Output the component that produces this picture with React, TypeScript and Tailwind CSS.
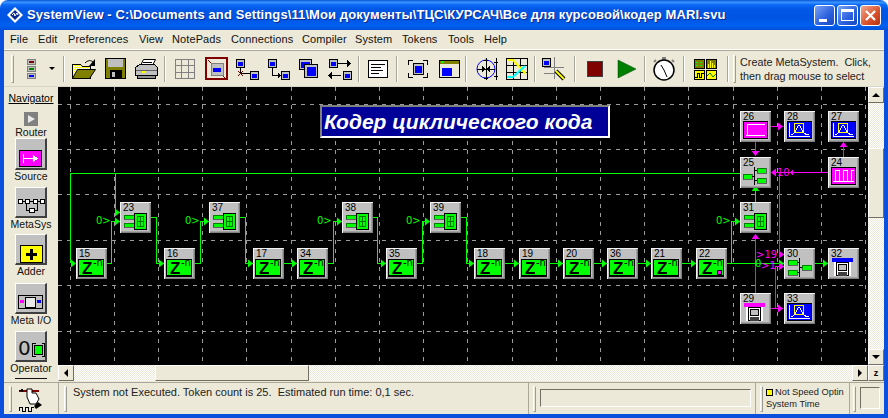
import React from "react";

const G = "#00ff00";
const M = "#ff00ff";
const sans = "font-['Liberation_Sans',Arial,sans-serif]";

type Kind = "z" | "zs" | "op" | "fan" | "fanr" | "src" | "pulse" | "sink" | "diskm" | "diskb";
const nodes: [string, number, number, Kind][] = [
  ["15", 76, 248, "z"], ["23", 120, 202, "op"], ["16", 164, 248, "z"], ["37", 209, 202, "op"],
  ["17", 253, 248, "z"], ["34", 297, 248, "z"], ["38", 342, 202, "op"], ["35", 386, 248, "z"],
  ["39", 430, 202, "op"], ["18", 474, 248, "z"], ["19", 519, 248, "z"], ["20", 563, 248, "z"],
  ["36", 607, 248, "z"], ["21", 651, 248, "z"], ["22", 696, 248, "zs"], ["30", 784, 248, "fanr"],
  ["32", 828, 248, "diskb"], ["29", 740, 293, "diskm"], ["33", 784, 293, "sink"], ["31", 740, 202, "op"],
  ["25", 740, 157, "fan"], ["26", 740, 111, "src"], ["28", 784, 111, "sink"], ["27", 828, 111, "sink"],
  ["24", 828, 157, "pulse"],
];

function NodeArt({ kind }: { kind: Kind }) {
  const disk = (c: string) => (
    <>
      <rect x="4" y="10" width="21" height="4" fill={c} />
      <rect x="6" y="14" width="17" height="14" fill="#fff" />
      <rect x="8.5" y="14.5" width="12" height="13" fill="#fff" stroke="#000" />
      <rect x="10.5" y="16.5" width="8" height="6" fill="#c0c0c0" stroke="#000" />
      <rect x="10" y="24" width="9" height="4" fill="#404040" />
    </>
  );
  if (kind === "op")
    return (
      <>
        <rect x="4" y="13" width="10" height="4" fill={G} stroke="#000" strokeWidth=".5" />
        <rect x="4" y="21" width="10" height="4" fill={G} stroke="#000" strokeWidth=".5" />
        <rect x="14.5" y="11.5" width="12" height="16" fill={G} stroke="#000" />
        <rect x="17.5" y="14.5" width="6" height="10" fill="none" stroke="#007700" />
        <path d="M18 19.5h5M20.5 15v9" stroke="#007700" />
      </>
    );
  if (kind === "fan")
    return (
      <>
        <rect x="3" y="17" width="9" height="5" fill={G} stroke="#000" strokeWidth=".5" />
        <rect x="17" y="11" width="9" height="5" fill={G} stroke="#000" strokeWidth=".5" />
        <rect x="17" y="21" width="9" height="5" fill={G} stroke="#000" strokeWidth=".5" />
        <path d="M14.5 10v18M12 19.5h3M14 13.5h3M14 23.5h3" stroke="#000" fill="none" />
      </>
    );
  if (kind === "fanr")
    return (
      <>
        <rect x="4" y="12" width="9" height="5" fill={G} stroke="#000" strokeWidth=".5" />
        <rect x="4" y="22" width="9" height="5" fill={G} stroke="#000" strokeWidth=".5" />
        <rect x="18" y="17" width="9" height="5" fill={G} stroke="#000" strokeWidth=".5" />
        <path d="M15.5 10v19M13 14.5h3M13 24.5h3M15 19.5h3" stroke="#000" fill="none" />
      </>
    );
  if (kind === "src")
    return (
      <>
        <rect x="3.5" y="10.5" width="24" height="17" fill={M} stroke="#000" />
        <path d="M6 24.5h19M7.5 24.5v-11h17" stroke="#fff" fill="none" />
      </>
    );
  if (kind === "pulse")
    return (
      <>
        <rect x="3.5" y="10.5" width="24" height="17" fill={M} stroke="#000" />
        <path d="M5 24.5h21M7.5 24.5v-11h4v11M15.500 24.5v-11h4v11h4v-11h2" stroke="#fff" fill="none" />
      </>
    );
  if (kind === "sink")
    return (
      <>
        <rect x="3.5" y="10.5" width="24" height="17" fill="#0000ff" stroke="#000" />
        <rect x="10.5" y="12.5" width="9" height="9" fill="none" stroke="#ffff00" />
        <path d="M5.500 12v13.5h20M7 24c3 0 3-2 5-5s2-5 3-5 2 3 3 5 3 5 7 5" stroke="#fff" fill="none" />
      </>
    );
  if (kind === "diskm") return disk(M);
  if (kind === "diskb") return disk("#0000ff");
  return null;
}

function BlockNode({ n, x, y, kind }: { n: string; x: number; y: number; kind: Kind }) {
  const isZ = kind === "z" || kind === "zs";
  return (
    <div
      className="absolute w-[31px] h-[31px] bg-[#c0c0c0] shadow-[inset_1px_1px_0_#f4f4f4,inset_-1px_-1px_0_#808080,inset_-2px_-2px_0_#a0a0a0]"
      style={{ left: x - 58, top: y - 87 }}
    >
      <span className={`absolute left-[3px] top-0 text-[10px] leading-[11px] text-black ${sans}`}>{n}</span>
      {isZ ? (
        <div className="absolute left-[2px] top-[11px] w-[26px] h-[18px] bg-[#00ff00] border border-black border-b-2">
          <span className={`absolute left-[3px] top-[1px] text-[17px] leading-[15px] font-bold text-black ${sans}`}>Z</span>
          <span className="absolute left-[14px] top-[-2px] text-[10px] leading-[10px] text-black font-['DejaVu_Sans',sans-serif]">-n</span>
          {kind === "zs" && <span className="absolute right-[2px] bottom-[1px] w-[3px] h-[3px] bg-[#ff00ff] outline outline-black" />}
        </div>
      ) : (
        <svg className="absolute inset-0" width="31" height="31" viewBox="0 0 31 31" shapeRendering="crispEdges">
          <NodeArt kind={kind} />
        </svg>
      )}
    </div>
  );
}

const Arr = ({ x, y, c, d = "r" }: { x: number; y: number; c: string; d?: "r" | "l" | "u" | "d" }) => {
  const pts =
    d === "r" ? `${x},${y} ${x - 5},${y - 4} ${x - 5},${y + 4}` :
    d === "l" ? `${x},${y} ${x + 5},${y - 4} ${x + 5},${y + 4}` :
    d === "u" ? `${x},${y} ${x - 4},${y + 5} ${x + 4},${y + 5}` :
    `${x},${y} ${x - 4},${y - 5} ${x + 4},${y - 5}`;
  return <polygon points={pts} fill={c} />;
};

function Wires() {
  const gx = Array.from({ length: 19 }, (_, i) => Math.round(69.5 + 44.2 * i) + 0.5);
  const gy = [104, 149, 194, 240, 285, 331].map((v) => v + 0.5);
  const green = [
    "M70.5 263V173.5H740",
    "M115.5 173.5V212H120",
    "M107 263.5H111.5V221H120",
    "M151 217H156.5V263.5H164",
    "M195 263.5H200.5V221.5H209",
    "M240 217H245.5V263.5H253",
    "M284 263.5H297",
    "M328 263.5H333.5V221.5H342",
    "M373 217H377.5V263.5H386",
    "M417 263.5H422.5V221.5H430",
    "M461 217H466.5V263.5H474",
    "M505 263.5H519M550 263.5H563M594 263.5H607M638 263.5H651M682 263.5H696",
    "M727 263.5H784",
    "M731.5 263V221.5H740",
    "M755.5 202V186",
    "M815 263.5H828",
  ];
  const mag = [
    "M771 126.5H783",
    "M755.5 142V156",
    "M843.5 157V142",
    "M828 172.5H772",
    "M779.5 172V254H784",
    "M755.5 293V234",
    "M771 308.5H783",
    "M775.5 308V266.5H784",
  ];
  return (
    <svg className="absolute inset-0" width="810" height="277" viewBox="58 87 810 277">
      <g stroke="#9c9c9c" strokeDasharray="4 5" shapeRendering="crispEdges">
        {gx.map((v) => <line key={v} x1={v} x2={v} y1="87" y2="364" />)}
        {gy.map((v) => <line key={v} y1={v} y2={v} x1="58" x2="868" />)}
      </g>
      <g stroke={G} fill="none" shapeRendering="crispEdges">
        {green.map((d) => <path key={d} d={d} />)}
      </g>
      <g stroke={M} fill="none" shapeRendering="crispEdges">
        {mag.map((d) => <path key={d} d={d} />)}
      </g>
      {[[76, 263], [120, 212], [120, 221], [164, 263], [209, 221], [253, 263], [297, 263], [342, 221], [386, 263], [430, 221], [474, 263], [519, 263], [563, 263], [607, 263], [651, 263], [696, 263], [740, 221], [784, 263], [828, 263]].map(([x, y]) => (
        <Arr key={`${x}-${y}`} x={x} y={y + 0.5} c={G} />
      ))}
      <Arr x={755.5} y={186} c={G} d="u" />
      <Arr x={783} y={126.5} c={M} />
      <Arr x={755.5} y={156} c={M} d="d" />
      <Arr x={843.5} y={142} c={M} d="u" />
      <Arr x={771} y={172.5} c={M} d="l" />
      <polygon points="790,172.5 793,169.5 793,175.5" fill={M} />
      <Arr x={784} y={254.5} c={M} />
      <Arr x={755.5} y={234} c={M} d="u" />
      <Arr x={783} y={308.5} c={M} />
      <Arr x={784} y={266.5} c={M} />
    </svg>
  );
}

const labels: [string, number, number, string][] = [
  ["0>", 96, 216, "text-[#00ff00]"], ["0>", 185, 216, "text-[#00ff00]"], ["0>", 317, 216, "text-[#00ff00]"],
  ["0>", 406, 216, "text-[#00ff00]"], ["0>", 716, 216, "text-[#00ff00]"], ["10", 777, 168, "text-[#ff00ff]"],
  [">19", 756, 250, "text-[#ff00ff]"], ["0", 755, 259, "text-[#00ff00]"], [">1", 761, 261, "text-[#ff00ff]"],
];

/* ---------- toolbar drawings ---------- */
const Ico = ({ w = 26, children }: { w?: number; children: React.ReactNode }) => (
  <svg width={w} height="24" viewBox={`0 0 ${w} 24`} shapeRendering="crispEdges">{children}</svg>
);
const Win = ({ x, y, w = 8, h = 8, f = "#0000ff" }: { x: number; y: number; w?: number; h?: number; f?: string }) => (
  <g>
    <rect x={x + 0.5} y={y + 0.5} width={w} height={h} fill="#c0c0c0" stroke="#000" />
    <rect x={x + 2} y={y + 3} width={w - 3} height={h - 4} fill={f} />
  </g>
);

const Folder = () => (
  <Ico>
    <defs>
      <pattern id="dy" width="2" height="2" patternUnits="userSpaceOnUse">
        <rect width="2" height="2" fill="#ffff00" /><rect width="1" height="1" fill="#fff" /><rect x="1" y="1" width="1" height="1" fill="#fff" />
      </pattern>
    </defs>
    <path d="M1.500 7.500h8l2 2h8v12h-18z" fill="url(#dy)" stroke="#000" />
    <path d="M6.500 12.500h18l-6 9h-17z" fill="#808000" stroke="#000" shapeRendering="auto" />
    <path d="M14 6c3-3 6-3 8-1" stroke="#000" fill="none" shapeRendering="auto" />
    <path d="M24 2v7h-6z" fill="#000" shapeRendering="auto" />
  </Ico>
);
const Floppy = () => (
  <Ico>
    <rect x="3.500" y="1.500" width="20" height="20" fill="#808000" stroke="#000" />
    <rect x="6" y="2" width="15" height="8" fill="#c0c0c0" />
    <rect x="8" y="13" width="12" height="9" fill="#000" />
    <rect x="10" y="15" width="3" height="5" fill="#c0c0c0" />
  </Ico>
);
const Printer = () => (
  <Ico>
    <path d="M7.500 8.500l3-6h12l-3 6z" fill="#fff" stroke="#000" shapeRendering="auto" />
    <path d="M10 5h9M9 7h9" stroke="#000" />
    <path d="M2.500 10.500l4-3h15l3 3v8h-22z" fill="#c0c0c0" stroke="#000" />
    <rect x="3" y="13" width="21" height="1" fill="#606060" />
    <rect x="9" y="14" width="4" height="2" fill="#ffff00" />
    <rect x="4.500" y="18.500" width="18" height="3" fill="#909090" stroke="#000" />
  </Ico>
);
const GridIco = () => (
  <Ico>
    <rect x="3.500" y="2.500" width="19" height="19" fill="#ece9d8" stroke="#808080" />
    <path d="M9.500 3v18M16.500 3v18M4 8.500h18M4 15.500h18" stroke="#808080" />
  </Ico>
);
const Framed = () => (
  <Ico>
    <rect x="3" y="1" width="21" height="21" fill="none" stroke="#800000" strokeWidth="2" />
    <rect x="8.500" y="6.500" width="12" height="12" fill="#c0c0c0" stroke="#808080" />
    <rect x="10" y="11" width="8" height="4" fill="#0000ff" />
    <path d="M5 3l3 3M20 19l3 3" stroke="#800000" />
  </Ico>
);
const Link1 = () => (
  <Ico>
    <Win x={2} y={2} />
    <Win x={16} y={14} />
    <path d="M6.500 11v5.500H16" stroke="#000" fill="none" />
    <path d="M4 14l5 5M9 14l-5 5" stroke="#800000" />
  </Ico>
);
const Link2 = () => (
  <Ico>
    <Win x={3} y={2} />
    <Win x={16} y={14} />
    <path d="M7.500 11v7.500H15" stroke="#000" fill="none" />
    <path d="M13 16v5l3-2.500z" fill="#000" />
  </Ico>
);
const Stack = () => (
  <Ico>
    <Win x={3} y={2} w={12} h={10} />
    <rect x="8.500" y="7.500" width="13" height="13" fill="#c0c0c0" stroke="#000" />
    <rect x="11" y="10" width="9" height="9" fill="#0000ff" />
  </Ico>
);
const Swap = () => (
  <Ico>
    <Win x={2} y={2} />
    <Win x={16} y={14} />
    <path d="M11 6.500h9M5 18.500h9" stroke="#000" />
    <path d="M20 3v7l4-3.500zM5 15v7l-4-3.500z" fill="#000" />
  </Ico>
);
const Note = () => (
  <Ico>
    <rect x="3.500" y="3.500" width="19" height="17" fill="#fff" stroke="#000" />
    <path d="M6 7.500h14M6 10.500h10M6 13.500h12M6 16.500h8" stroke="#000" />
  </Ico>
);
const Select = () => (
  <Ico>
    <path d="M3.500 8V3.500H8M18 3.500h4.500V8M22.500 16v4.500H18M8 20.500H3.500V16" stroke="#000" fill="none" />
    <Win x={8} y={6} w={10} h={11} />
  </Ico>
);
const Win2 = () => (
  <Ico>
    <rect x="3.500" y="3.500" width="20" height="17" fill="#ece9d8" stroke="#000" />
    <rect x="4" y="4" width="19" height="3" fill="#808000" />
    <rect x="5" y="4" width="3" height="2" fill="#00ff00" />
    <rect x="6" y="11" width="10" height="8" fill="#0000ff" />
  </Ico>
);
const Target = () => (
  <Ico>
    <circle cx="13" cy="12" r="9" fill="none" stroke="#0000ff" shapeRendering="auto" />
    <path d="M13 1v22M23 1v22M4 12h18" stroke="#000" />
    <path d="M9 9l4 3l-4 3zM17 9l-4 3l4 3z" fill="#000" />
    <path d="M11 3h4M11 21h4M21 5h4M21 19h4" stroke="#000" />
  </Ico>
);
const Plot = () => (
  <Ico>
    <rect x="2.500" y="1.500" width="21" height="21" fill="#ece9d8" stroke="#000" />
    <path d="M9.500 2v20M16.500 2v20M3 8.500h20M3 15.500h20" stroke="#000" />
    <path d="M3 3h6l13 14" stroke="#ffff00" strokeWidth="2" fill="none" shapeRendering="auto" />
    <path d="M3 20h6L21 9" stroke="#00ffff" strokeWidth="2" fill="none" shapeRendering="auto" />
  </Ico>
);
const Probe = () => (
  <Ico>
    <Win x={1} y={1} />
    <path d="M13.500 0v22M3 10.500h20M3 16.500h10" stroke="#808080" />
    <path d="M15 14l8 8" stroke="#000" strokeWidth="4" shapeRendering="auto" />
    <path d="M15 14l8 8" stroke="#ffff00" strokeWidth="2" shapeRendering="auto" />
  </Ico>
);
const Stop = () => (
  <Ico><rect x="5.500" y="4.500" width="15" height="15" fill="#800000" stroke="#404040" /></Ico>
);
const Play = () => (
  <Ico><polygon points="5,3 23,12 5,21" fill="#008000" stroke="#004000" strokeWidth=".5" shapeRendering="auto" /></Ico>
);
const Clock = () => (
  <Ico w={26}>
    <g shapeRendering="auto">
      <rect x="11" y="0" width="4" height="3" fill="#808080" />
      <circle cx="13" cy="13" r="10" fill="#fff" stroke="#000" strokeWidth="1.500" />
      <path d="M21 3l2 2M5 3l-2 2" stroke="#808080" strokeWidth="2" />
      <path d="M13 13l-3-5M13 13l3 7" stroke="#000" />
    </g>
  </Ico>
);
const Quad = () => (
  <Ico>
    <rect x="2.500" y="2.500" width="10" height="9" fill="#808000" stroke="#000" />
    <rect x="14.500" y="2.500" width="10" height="9" fill="#808000" stroke="#000" />
    <rect x="2.500" y="13.500" width="10" height="9" fill="#ffff00" stroke="#000" />
    <rect x="14.500" y="13.500" width="10" height="9" fill="#ffff00" stroke="#000" />
    <path d="M4 5h2M8 5h2M4 8h2M8 8h2" stroke="#00ff00" />
    <path d="M16.500 11V7M18.500 11V4M20.500 11V6M22.500 11V8" stroke="#ffff00" />
    <path d="M3 20.500h2v-4h2v4h2v-4h3" stroke="#000" fill="none" />
    <path d="M15 19l3-3 3 4 3-3" stroke="#008000" fill="none" shapeRendering="auto" />
  </Ico>
);

const Sep = ({ m }: { m: string }) => <div className={`w-[2px] h-[26px] shrink-0 border-l border-[#a8a699] border-r border-r-white ${m}`} />;
const Grip = ({ h }: { h: string }) => <div className={`w-[3px] shrink-0 ${h} border-l border-t border-white border-r border-b border-r-[#9d9b8e] border-b-[#9d9b8e]`} />;
const Btn = ({ children, w = "w-[31px]" }: { children: React.ReactNode; w?: string }) => (
  <div className={`${w} h-[31px] flex items-center justify-center shrink-0`}>{children}</div>
);

const MiniBtn = ({ c }: { c: string }) => (
  <span className="w-[9px] h-[6px] border border-[#808080] flex items-center justify-center bg-[#c0c0c0]">
    <span className={`w-[5px] h-[2px] ${c}`} />
  </span>
);

const menu: [string, string][] = [
  ["File", "w-[28px]"], ["Edit", "w-[30px]"], ["Preferences", "w-[71px]"], ["View", "w-[33px]"], ["NotePads", "w-[59px]"],
  ["Connections", "w-[71px]"], ["Compiler", "w-[53px]"], ["System", "w-[47px]"], ["Tokens", "w-[46px]"], ["Tools", "w-[36px]"], ["Help", "w-[40px]"],
];

const NavBtn = ({ children, className = "h-[31px]" }: { children: React.ReactNode; className?: string }) => (
  <div className={`relative w-[32px] shrink-0 bg-[#c0c0c0] border-t border-l border-white border-r-2 border-b-2 border-r-[#404040] border-b-[#404040] ${className}`}>
    {children}
  </div>
);
const NavLabel = ({ children }: { children: React.ReactNode }) => (
  <div className="h-[13px] shrink-0 leading-[13px] text-[10.5px] text-center whitespace-nowrap text-[#111]">{children}</div>
);

const SbBtn = ({ children, className = "" }: { children?: React.ReactNode; className?: string }) => (
  <div className={`w-[16px] h-[16px] shrink-0 flex items-center justify-center bg-[#ece9d8] border-t border-l border-white border-r border-b border-r-[#716f64] border-b-[#716f64] ${className}`}>{children}</div>
);
const dither = "bg-[repeating-conic-gradient(#ffffff_0_25%,#ece9d8_0_50%)] bg-[length:2px_2px]";
const thumb = "bg-[#ece9d8] border-t border-l border-white border-r border-b border-r-[#716f64] border-b-[#716f64]";

export default function App() {
  return (
    <div className={`w-[888px] h-[418px] bg-white overflow-hidden flex flex-col ${sans}`}>
      {/* title bar */}
      <div className="h-[30px] shrink-0 rounded-t-[8px] flex items-center pl-[7px] pr-[7px] bg-[linear-gradient(180deg,#0a58d8_0%,#3a93ff_8%,#0a6af5_16%,#0258e6_30%,#0054e3_60%,#0060f0_85%,#0050d8_100%)]">
        <svg width="16" height="16" viewBox="0 0 16 16" className="shrink-0">
          <polygon points="8,0 16,8 8,16 0,8" fill="#fff" />
          <polygon points="8,3 13,8 8,13 3,8" fill="#0a2a90" />
          <path d="M5 8l2-2 1 3 2-3 1 2" stroke="#fff" fill="none" />
        </svg>
        <span className="ml-[4px] text-white font-bold text-[13px] tracking-[0.1px] whitespace-nowrap [text-shadow:1px_1px_0_#0a2a90]">
          SystemView - C:\Documents and Settings\11\Мои документы\ТЦС\КУРСАЧ\Все для курсовой\кодер MARI.svu
        </span>
        <div className="ml-auto flex gap-[2px] items-center">
          <div className="w-[21px] h-[21px] rounded-[3px] border border-white bg-[linear-gradient(135deg,#7aa2f4,#2a5fdd_60%,#1c48c0)] flex items-end pl-[4px] pb-[3px]">
            <span className="w-[8px] h-[3px] bg-white" />
          </div>
          <div className="w-[21px] h-[21px] rounded-[3px] border border-white bg-[linear-gradient(135deg,#7aa2f4,#2a5fdd_60%,#1c48c0)] flex items-center justify-center">
            <span className="w-[13px] h-[12px] border border-white border-t-[3px]" />
          </div>
          <div className="w-[21px] h-[21px] rounded-[3px] border border-white bg-[linear-gradient(135deg,#f0a890,#d8502a_60%,#b83010)] flex items-center justify-center">
            <svg width="13" height="13" viewBox="0 0 13 13"><path d="M2 2l9 9M11 2l-9 9" stroke="#fff" strokeWidth="2.200" /></svg>
          </div>
        </div>
      </div>

      {/* window body */}
      <div className="flex-1 min-h-0 flex flex-col border-x-4 border-b-4 border-[#0a50dc] bg-[#ece9d8] text-black">
        {/* menu */}
        <div className="h-[20px] shrink-0 flex items-center pl-[6px] text-[11px] tracking-[0.1px] text-[#111] border-b border-[#ffffff]">
          {menu.map(([t, w]) => <span key={t} className={w}>{t}</span>)}
        </div>
        {/* toolbar */}
        <div className="h-[37px] shrink-0 flex items-center border-t border-[#aca899] border-b border-b-[#d8d5c4] pl-[7px]">
          <Grip h="h-[28px]" />
          <Btn w="w-[34px]">
            <div className="flex flex-col gap-[1px]">
              <MiniBtn c="bg-[#800000]" /><MiniBtn c="bg-[#008000]" /><MiniBtn c="bg-[#0000ff]" />
            </div>
          </Btn>
          <Btn w="w-[8px]"><span className="w-0 h-0 border-x-[3px] border-x-transparent border-t-[3px] border-t-black" /></Btn>
          <Sep m="ml-[7px] mr-[3px]" />
          <Btn><Folder /></Btn><Btn><Floppy /></Btn><Btn><Printer /></Btn>
          <Sep m="mx-[3px]" />
          <Btn><GridIco /></Btn><Btn><Framed /></Btn><Btn><Link1 /></Btn><Btn><Link2 /></Btn><Btn><Stack /></Btn><Btn><Swap /></Btn>
          <Sep m="ml-[3px] mr-[2px]" />
          <Btn><Note /></Btn>
          <Sep m="ml-[3px] mr-[4px]" />
          <Btn><Select /></Btn><Btn><Win2 /></Btn>
          <Sep m="ml-[1px] mr-[3px]" />
          <Btn><Target /></Btn><Btn><Plot /></Btn>
          <Sep m="mx-[2px]" />
          <Btn><Probe /></Btn>
          <Sep m="ml-[5px] mr-[3px]" />
          <Btn><Stop /></Btn><Btn><Play /></Btn>
          <Sep m="ml-[3px] mr-[2px]" />
          <Btn><Clock /></Btn>
          <Sep m="mx-[4px]" />
          <Btn><Quad /></Btn>
          <Sep m="ml-[7px] mr-[4px]" />
          <Grip h="h-[28px]" />
          <div className="ml-[4px] text-[10.8px] leading-[14px] whitespace-nowrap text-[#222]">
            Create MetaSystem.&nbsp; Click,<br />then drag mouse to select
          </div>
        </div>

        {/* main */}
        <div className="flex-1 min-h-0 flex">
          {/* navigator */}
          <div className="w-[54px] shrink-0 flex flex-col items-center pt-[5px] overflow-hidden">
            <div className="text-[10.5px] leading-[13px] underline h-[20px] shrink-0">Navigator</div>
            <div className="w-[14px] h-[14px] shrink-0 bg-[#808080] flex items-center justify-center">
              <span className="w-0 h-0 border-y-[4px] border-y-transparent border-l-[7px] border-l-[#e8e8e8]" />
            </div>
            <NavLabel>Router</NavLabel>
            <NavBtn className="h-[32px] mt-[-1px]">
              <div className="absolute left-[3px] top-[11px] w-[23px] h-[17px] bg-[#ff00ff] border border-black flex items-center justify-center">
                <svg width="18" height="11" viewBox="0 0 18 11" shapeRendering="crispEdges"><path d="M1.500 1v9M2 5.500h13" stroke="#fff" /><path d="M11 2v7l5-3.500z" fill="#fff" /></svg>
              </div>
            </NavBtn>
            <NavLabel>Source</NavLabel>
            <NavBtn className="h-[31px] mt-[4px]">
              <svg className="absolute left-[1px] top-[10px]" width="28" height="16" viewBox="0 0 28 16" shapeRendering="crispEdges">
                <path d="M2 3.500h24M9.500 4v8.500H20V4" stroke="#000" fill="none" />
                <rect x="1.500" y="1.500" width="4" height="4" fill="#fff" stroke="#000" />
                <rect x="8.500" y="1.500" width="4" height="4" fill="#fff" stroke="#000" />
                <rect x="16.500" y="1.500" width="4" height="4" fill="#fff" stroke="#000" />
                <rect x="23.500" y="1.500" width="4" height="4" fill="#fff" stroke="#000" />
                <rect x="12.500" y="10.500" width="5" height="4" fill="#fff" stroke="#000" />
              </svg>
            </NavBtn>
            <NavLabel>MetaSys</NavLabel>
            <NavBtn className="h-[31px] mt-[3px]">
              <div className="absolute left-[4px] top-[10px] w-[23px] h-[18px] bg-[#ffff00] border border-black flex items-center justify-center">
                <svg width="11" height="11" viewBox="0 0 11 11" shapeRendering="crispEdges"><path d="M4 0h3v4h4v3H7v4H4V7H0V4h4z" fill="#000" /></svg>
              </div>
            </NavBtn>
            <NavLabel>Adder</NavLabel>
            <NavBtn className="h-[31px] mt-[5px]">
              <svg className="absolute left-[1px] top-[10px]" width="28" height="16" viewBox="0 0 28 16" shapeRendering="crispEdges">
                <rect x="1.500" y="1.500" width="24" height="13" fill="none" stroke="#000" />
                <rect x="3" y="6" width="4" height="3" fill="#ff00ff" />
                <rect x="20" y="6" width="4" height="3" fill="#0000ff" />
                <rect x="8.500" y="3.500" width="10" height="10" fill="#e8e8e8" stroke="#000" />
              </svg>
            </NavBtn>
            <NavLabel>Meta I/O</NavLabel>
            <NavBtn className="h-[31px] mt-[4px]">
              <span className="absolute left-[2px] top-[5px] text-[20px] leading-[22px] text-[#111] font-['DejaVu_Sans',sans-serif]">0</span>
              <svg className="absolute left-[16px] top-[11px]" width="13" height="15" viewBox="0 0 13 15" shapeRendering="crispEdges">
                <path d="M3.500.500H.500v13h3M9.500.500h3v13h-3" stroke="#000" fill="none" />
                <rect x="2.500" y="2.500" width="8" height="9" fill="#00ff00" stroke="#000" />
              </svg>
            </NavBtn>
            <NavLabel>Operator</NavLabel>
            <div className="mt-[3px] w-[32px] h-[1px] shrink-0 bg-[#111]" />
          </div>

          {/* canvas + scrollbars */}
          <div className="flex-1 min-w-0 flex flex-col">
            <div className="flex-1 min-h-0 flex">
              <div className="relative flex-1 bg-black overflow-hidden">
                <Wires />
                <div className="absolute left-[262px] top-[18px] w-[290px] h-[33px] bg-[#000099] border-t-2 border-l-2 border-t-[#808080] border-l-[#808080] border-r-2 border-b-2 border-r-white border-b-white flex items-center pl-[2px]">
                  <span className="italic font-bold text-[21px] text-white whitespace-nowrap leading-none">Кодер циклического кода</span>
                </div>
                {nodes.map(([n, x, y, k]) => <BlockNode key={n} n={n} x={x} y={y} kind={k} />)}
                {labels.map(([t, x, y, c], i) => (
                  <span key={i} className={`absolute text-[10px] leading-[9px] font-['DejaVu_Sans',sans-serif] ${c}`} style={{ left: x - 58, top: y - 87 }}>{t}</span>
                ))}
              </div>
              <div className="w-[16px] shrink-0 flex flex-col">
                <SbBtn><span className="w-0 h-0 border-x-[4px] border-x-transparent border-b-[4px] border-b-black" /></SbBtn>
                <div className={`h-[45px] ${dither}`} />
                <div className={`h-[70px] ${thumb}`} />
                <div className={`flex-1 ${dither}`} />
                <SbBtn><span className="w-0 h-0 border-x-[4px] border-x-transparent border-t-[4px] border-t-black" /></SbBtn>
              </div>
            </div>
            <div className="h-[17px] shrink-0 flex pb-[1px]">
              <SbBtn><span className="w-0 h-0 border-y-[4px] border-y-transparent border-r-[4px] border-r-black" /></SbBtn>
              <div className={`w-[81px] ${dither}`} />
              <div className={`w-[154px] ${thumb}`} />
              <div className={`flex-1 ${dither}`} />
              <SbBtn><span className="w-0 h-0 border-y-[4px] border-y-transparent border-l-[4px] border-l-black" /></SbBtn>
              <SbBtn><span className="text-[9px] font-bold leading-none">z</span></SbBtn>
            </div>
          </div>
        </div>

        {/* status bar */}
        <div className="h-[32px] shrink-0 flex items-stretch border-t border-[#aca899] text-[11px] text-[#222]">
          <div className="w-[55px] shrink-0 flex items-center pl-[5px] gap-[6px] border-r border-[#aca899]">
            <Grip h="h-[26px]" />
            <svg width="26" height="27" viewBox="0 0 26 27" shapeRendering="crispEdges" className="shrink-0">
              <path d="M1 5.500h20" stroke="#800000" strokeWidth="2" />
              <path d="M1 5.500l4-2v4z" fill="#000" />
              <path d="M9 4h5v4h4l3 6-3 5h-6L9 12z" fill="#fff" stroke="#000" shapeRendering="auto" />
              <path d="M20 17l4 3-6 4-2-3z" fill="#000" shapeRendering="auto" />
              <path d="M1.500 26v-4h3v4h3v-4h3v4h3v-4h2" stroke="#000" fill="none" />
            </svg>
          </div>
          <div className="w-[470px] shrink-0 flex pl-[5px] border-r border-[#aca899]">
            <div className="mt-[3px]"><Grip h="h-[26px]" /></div>
            <span className="ml-[6px] mt-[1px] whitespace-nowrap">System not Executed. Token count is 25.&nbsp; Estimated run time: 0,1 sec.</span>
          </div>
          <div className="w-[227px] shrink-0 flex pl-[4px] border-r border-[#aca899]">
            <div className="mt-[3px]"><Grip h="h-[26px]" /></div>
            <div className="ml-[4px] mt-[6px] w-[211px] h-[18px] border-t border-l border-[#716f64] border-r border-b border-r-white border-b-white" />
          </div>
          <div className="w-[94px] shrink-0 flex pl-[4px] border-r border-[#aca899]">
            <div className="mt-[3px]"><Grip h="h-[26px]" /></div>
            <div className="ml-[3px] text-[9.3px] leading-[13px] mt-[3px] whitespace-nowrap">
              <div className="flex items-center gap-[2px]">
                <span className="w-[7px] h-[7px] bg-[#ffff00] border border-black" />Not Speed Optin
              </div>
              <div className="mt-[-1px]">System Time</div>
            </div>
          </div>
          <div className="flex-1 flex pl-[3px]">
            <div className="mt-[3px]"><Grip h="h-[26px]" /></div>
            <div className="ml-[4px] mt-[4px] w-[20px] h-[22px] border-t border-l border-[#716f64] border-r border-b border-r-white border-b-white" />
          </div>
        </div>
      </div>
    </div>
  );
}
